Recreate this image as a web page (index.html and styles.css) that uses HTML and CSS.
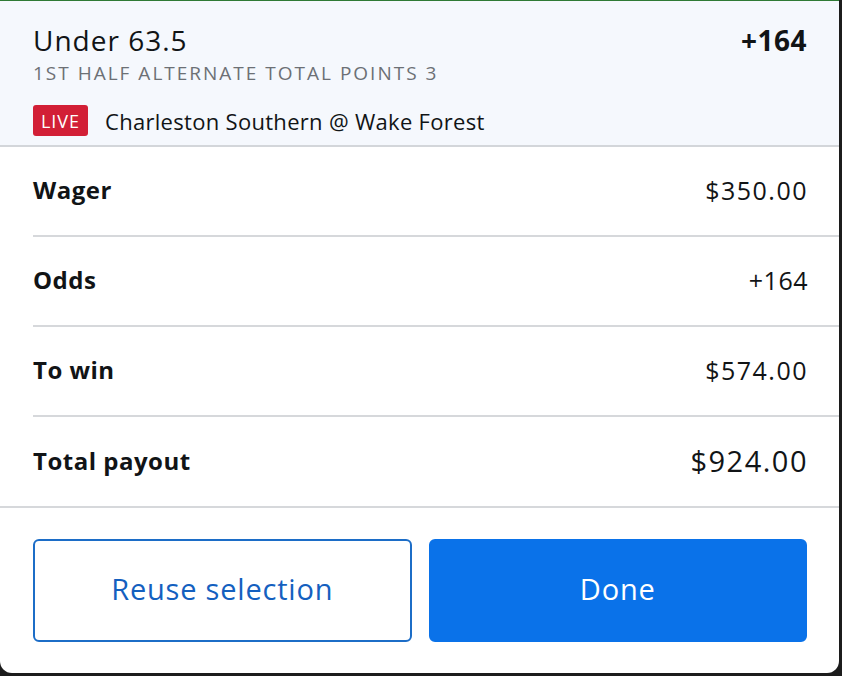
FILE: index.html
```html
<!DOCTYPE html>
<html>
<head>
<meta charset="utf-8">
<link rel="stylesheet" href="styles.css">
</head>
<body>
<div class="card">
  <div class="header">
    <div class="head-top">
      <div class="selection">Under 63.5</div>
      <div class="head-odds">+164</div>
    </div>
    <div class="market">1st Half Alternate Total Points 3</div>
    <div class="event">
      <span class="live">LIVE</span>
      <span class="teams">Charleston Southern @ Wake Forest</span>
    </div>
  </div>
  <div class="rows">
    <div class="row"><span class="label">Wager</span><span class="value">$350.00</span></div>
    <div class="row"><span class="label">Odds</span><span class="value odds">+164</span></div>
    <div class="row"><span class="label">To win</span><span class="value">$574.00</span></div>
    <div class="row last"><span class="label">Total payout</span><span class="value big">$924.00</span></div>
  </div>
  <div class="actions">
    <button class="btn outline">Reuse selection</button>
    <button class="btn solid">Done</button>
  </div>
</div>
</body>
</html>
```

FILE: styles.css
```css
html, body {
  margin: 0;
  padding: 0;
}
body {
  background: #1c1c1c;
  width: 842px;
  height: 676px;
  overflow: hidden;
  font-family: "Open Sans", "Liberation Sans", sans-serif;
  color: #111416;
}
.card {
  width: 839px;
  height: 673px;
  background: #ffffff;
  border-top: 1px solid #2f7a35;
  box-sizing: border-box;
  border-radius: 0 0 12px 12px;
  overflow: hidden;
  display: flex;
  flex-direction: column;
}
.header {
  background: #f5f8fd;
  padding: 20px 32px 0 33px;
  height: 146px;
  box-sizing: border-box;
  border-bottom: 2px solid #d3d6da;
}
.head-top {
  display: flex;
  justify-content: space-between;
  align-items: baseline;
  height: 38px;
  line-height: 38px;
}
.selection {
  font-size: 28px;
  font-weight: 400;
  letter-spacing: 1px;
}
.head-odds {
  font-size: 28px;
  font-weight: 700;
  letter-spacing: 0.5px;
}
.market {
  margin-top: 2px;
  font-size: 19px;
  line-height: 24px;
  text-transform: uppercase;
  letter-spacing: 2px;
  color: #6c7075;
}
.event {
  margin-top: 20px;
  display: flex;
  align-items: center;
}
.live {
  background: #d21f36;
  color: #ffffff;
  font-size: 18px;
  letter-spacing: 1px;
  border-radius: 3px;
  width: 55px;
  height: 31px;
  display: flex;
  align-items: center;
  justify-content: center;
  box-sizing: border-box;
}
.teams {
  margin-left: 17px;
  font-size: 22px;
  letter-spacing: 0.3px;
}
.rows {
  padding-left: 33px;
}
.row {
  display: flex;
  justify-content: space-between;
  align-items: center;
  height: 85px;
  padding-bottom: 3px;
  border-bottom: 2px solid #d6d8db;
  padding-right: 32px;
}
.row.last {
  margin-left: -33px;
  padding-left: 33px;
  height: 86px;
}
.label {
  font-size: 24px;
  font-weight: 700;
  letter-spacing: 0.5px;
}
.value {
  font-size: 25px;
  letter-spacing: 1.5px;
  margin-right: -1px;
}
.value.odds {
  letter-spacing: 0.5px;
}
.value.big {
  font-size: 29px;
}
.actions {
  display: flex;
  gap: 17px;
  padding: 31px 32px 0 33px;
}
.btn {
  flex: 1 1 0;
  width: 0;
  box-sizing: border-box;
  padding: 0 0 5px 0;
  height: 103px;
  border-radius: 6px;
  border: 2px solid #1c6dc7;
  font-family: inherit;
  font-size: 29px;
  letter-spacing: 0.8px;
  cursor: pointer;
}
.btn.outline {
  background: #ffffff;
  color: #1460bf;
}
.btn.solid {
  background: #0a72e9;
  border-color: #0a72e9;
  color: #ffffff;
}
```
